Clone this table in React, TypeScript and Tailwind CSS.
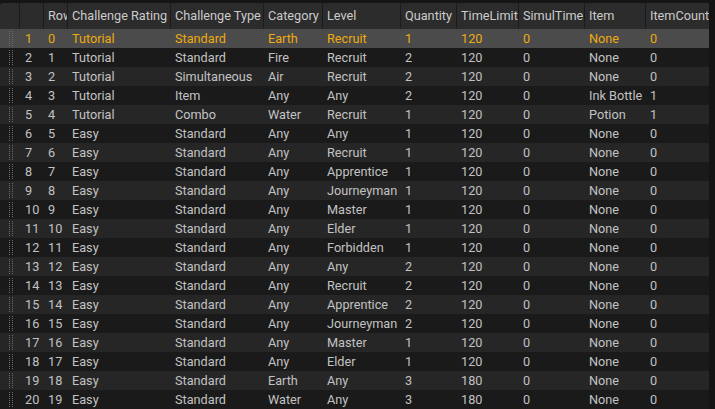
import React from 'react'

type Row = [string, string, string, string, string, string, string, string, string, string]

const columns = [
  { name: 'Row', w: 'w-[24px]' },
  { name: 'Challenge Rating', w: 'w-[103px]' },
  { name: 'Challenge Type', w: 'w-[93px]' },
  { name: 'Category', w: 'w-[59px]' },
  { name: 'Level', w: 'w-[78px]' },
  { name: 'Quantity', w: 'w-[56px]' },
  { name: 'TimeLimit', w: 'w-[62px]' },
  { name: 'SimulTime', w: 'w-[66px]' },
  { name: 'Item', w: 'w-[61px]' },
  { name: 'ItemCount', w: 'w-[63px]' },
]

const rows: Row[] = [
  ['0', 'Tutorial', 'Standard', 'Earth', 'Recruit', '1', '120', '0', 'None', '0'],
  ['1', 'Tutorial', 'Standard', 'Fire', 'Recruit', '2', '120', '0', 'None', '0'],
  ['2', 'Tutorial', 'Simultaneous', 'Air', 'Recruit', '2', '120', '0', 'None', '0'],
  ['3', 'Tutorial', 'Item', 'Any', 'Any', '2', '120', '0', 'Ink Bottle', '1'],
  ['4', 'Tutorial', 'Combo', 'Water', 'Recruit', '1', '120', '0', 'Potion', '1'],
  ['5', 'Easy', 'Standard', 'Any', 'Any', '1', '120', '0', 'None', '0'],
  ['6', 'Easy', 'Standard', 'Any', 'Recruit', '1', '120', '0', 'None', '0'],
  ['7', 'Easy', 'Standard', 'Any', 'Apprentice', '1', '120', '0', 'None', '0'],
  ['8', 'Easy', 'Standard', 'Any', 'Journeyman', '1', '120', '0', 'None', '0'],
  ['9', 'Easy', 'Standard', 'Any', 'Master', '1', '120', '0', 'None', '0'],
  ['10', 'Easy', 'Standard', 'Any', 'Elder', '1', '120', '0', 'None', '0'],
  ['11', 'Easy', 'Standard', 'Any', 'Forbidden', '1', '120', '0', 'None', '0'],
  ['12', 'Easy', 'Standard', 'Any', 'Any', '2', '120', '0', 'None', '0'],
  ['13', 'Easy', 'Standard', 'Any', 'Recruit', '2', '120', '0', 'None', '0'],
  ['14', 'Easy', 'Standard', 'Any', 'Apprentice', '2', '120', '0', 'None', '0'],
  ['15', 'Easy', 'Standard', 'Any', 'Journeyman', '2', '120', '0', 'None', '0'],
  ['16', 'Easy', 'Standard', 'Any', 'Master', '1', '120', '0', 'None', '0'],
  ['17', 'Easy', 'Standard', 'Any', 'Elder', '1', '120', '0', 'None', '0'],
  ['18', 'Easy', 'Standard', 'Earth', 'Any', '3', '180', '0', 'None', '0'],
  ['19', 'Easy', 'Standard', 'Water', 'Any', '3', '180', '0', 'None', '0'],
]

function Grip() {
  return (
    <div className="w-[20px] h-full flex justify-center gap-[2px] py-[2px] pl-[1px]">
      <div className="h-full border-l border-dotted border-[#6b6b6b]" />
      <div className="h-full border-l border-dotted border-[#6b6b6b]" />
    </div>
  )
}

export default function App() {
  return (
    <div
      className="w-[715px] h-[409px] overflow-hidden bg-[#151515] flex text-[12.7px] leading-none text-[#c2c2c2]"
      style={{ fontFamily: 'Roboto, "Noto Sans", sans-serif' }}
    >
      <div className="w-[709px] flex flex-col pt-[3px]">
        {/* header */}
        <div className="h-[26px] flex shrink-0 bg-[#2c2c2c] rounded-tl-[3px] text-[#cbcbcb]">
          <div className="w-[20px] border-r border-[#1b1b1b]" />
          <div className="w-[24px] border-r border-[#1b1b1b]" />
          {columns.map((c, i) => (
            <div
              key={c.name}
              className={`${c.w} shrink-0 flex items-center pl-[4px] pt-[1px] whitespace-nowrap overflow-hidden ${
                i < columns.length - 1 ? 'border-r border-[#1b1b1b]' : ''
              }`}
            >
              {c.name}
            </div>
          ))}
        </div>

        {/* rows */}
        {rows.map((r, i) => {
          const selected = i === 0
          const bg = selected ? 'bg-[#4b4b4b]' : i % 2 === 1 ? 'bg-[#1a1a1a]' : 'bg-[#262626]'
          return (
            <div
              key={i}
              className={`h-[19px] flex shrink-0 ${bg} ${selected ? 'text-[#eeaa10]' : ''}`}
            >
              <Grip />
              <div className="w-[24px] shrink-0 flex items-center pl-[5px] pt-[1px]">{i + 1}</div>
              {r.map((v, j) => (
                <div
                  key={j}
                  className={`${columns[j].w} shrink-0 flex items-center pl-[4px] pt-[1px] whitespace-nowrap overflow-hidden`}
                >
                  {v}
                </div>
              ))}
            </div>
          )
        })}
      </div>
      <div className="flex-1 bg-[#141414]" />
    </div>
  )
}
